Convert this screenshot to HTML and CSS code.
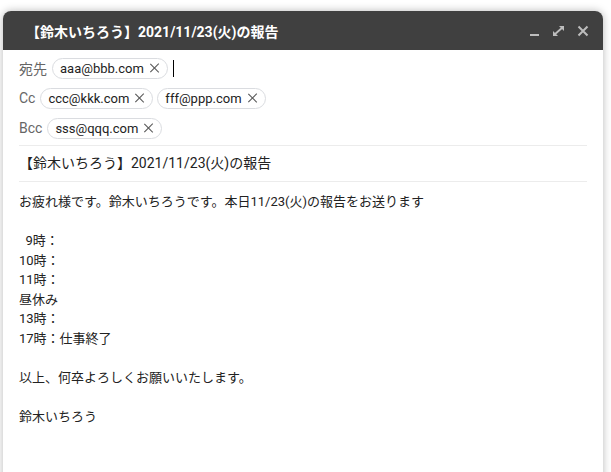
FILE: index.html
```html
<!DOCTYPE html>
<html lang="ja">

<head>
    <meta charset="UTF-8">
    <meta name="viewport" content="width=device-width, initial-scale=1.0">
    <title>新規メッセージ</title>
    <link rel="stylesheet" href="styles.css">
</head>

<body>
    <div class="compose">
        <!-- window title bar -->
        <div class="header">
            <span class="title">【鈴木いちろう】2021/11/23(火)の報告</span>
            <div class="controls">
                <svg width="11" height="12" viewBox="0 0 11 12">
                    <rect x="1" y="9" width="9" height="2" fill="#bdbdbd" />
                </svg>
                <svg width="13" height="12" viewBox="0 0 13 12">
                    <path d="M2.5 9.5 L10.5 2.5" stroke="#bdbdbd" stroke-width="1.8" fill="none" />
                    <path d="M7 1 H12 V6 Z" fill="#bdbdbd" />
                    <path d="M1 6 V11 H6 Z" fill="#bdbdbd" />
                </svg>
                <svg width="12" height="12" viewBox="0 0 12 12">
                    <path d="M1.5 1.5 L10.5 10.5 M10.5 1.5 L1.5 10.5" stroke="#bdbdbd" stroke-width="2" fill="none" />
                </svg>
            </div>
        </div>

        <div class="fields">
            <div class="recipients">
                <div class="row">
                    <span class="label">宛先</span>
                    <span class="chip">aaa@bbb.com<span class="x"></span></span>
                    <span class="cursor"></span>
                </div>
                <div class="row">
                    <span class="label">Cc</span>
                    <span class="chip">ccc@kkk.com<span class="x"></span></span>
                    <span class="chip">fff@ppp.com<span class="x"></span></span>
                </div>
                <div class="row">
                    <span class="label">Bcc</span>
                    <span class="chip">sss@qqq.com<span class="x"></span></span>
                </div>
            </div>

            <div class="subject">【鈴木いちろう】2021/11/23(火)の報告</div>

            <div class="message">お疲れ様です。鈴木いちろうです。本日11/23(火)の報告をお送ります

  9時：
10時：
11時：
昼休み
13時：
17時：仕事終了

以上、何卒よろしくお願いいたします。

鈴木いちろう</div>
        </div>
    </div>
</body>

</html>
```

FILE: styles.css
```css
body {
    margin: 0;
    padding: 11px 8px 0 3px;
    background-color: #fff;
    font-family: Roboto, Arial, "Noto Sans CJK JP", sans-serif;
    color: #222;
    overflow: hidden;
}

.compose {
    background-color: #fff;
    border-radius: 8px 8px 0 0;
    box-shadow: 0 0 8px rgba(0, 0, 0, 0.28);
    min-height: 480px;
}

.header {
    height: 39px;
    background-color: #404040;
    border-radius: 8px 8px 0 0;
    display: flex;
    align-items: center;
    justify-content: space-between;
    padding: 0 14px 0 23px;
}

.title {
    color: #fff;
    font-size: 14px;
    font-weight: bold;
}

.controls {
    display: flex;
    align-items: center;
    gap: 12px;
    padding-top: 1px;
}

.controls svg {
    display: block;
}

.fields {
    margin: 0 16px;
}

.recipients {
    padding-top: 3px;
    padding-bottom: 2px;
    border-bottom: 1px solid #ececec;
}

.row {
    height: 30px;
    display: flex;
    align-items: center;
    gap: 4px;
}

.label {
    color: #666;
    font-size: 14px;
    margin-right: 1px;
}

.chip {
    display: inline-flex;
    align-items: center;
    height: 19px;
    padding: 0 7px 0 7px;
    border: 1px solid #dadce0;
    border-radius: 11px;
    font-size: 13px;
    color: #222;
}

.x {
    position: relative;
    width: 10px;
    height: 10px;
    margin-left: 6px;
}

.x::before,
.x::after {
    content: "";
    position: absolute;
    left: 4px;
    top: -1px;
    width: 1.4px;
    height: 12px;
    background-color: #555;
    transform: rotate(45deg);
}

.x::after {
    transform: rotate(-45deg);
}

.cursor {
    width: 1px;
    height: 17px;
    background-color: #000;
    margin-left: 1px;
}

.subject {
    height: 35px;
    line-height: 35px;
    font-size: 14px;
    border-bottom: 1px solid #ececec;
}

.message {
    padding-top: 10px;
    font-size: 13px;
    line-height: 19.5px;
    white-space: pre-wrap;
}
```
